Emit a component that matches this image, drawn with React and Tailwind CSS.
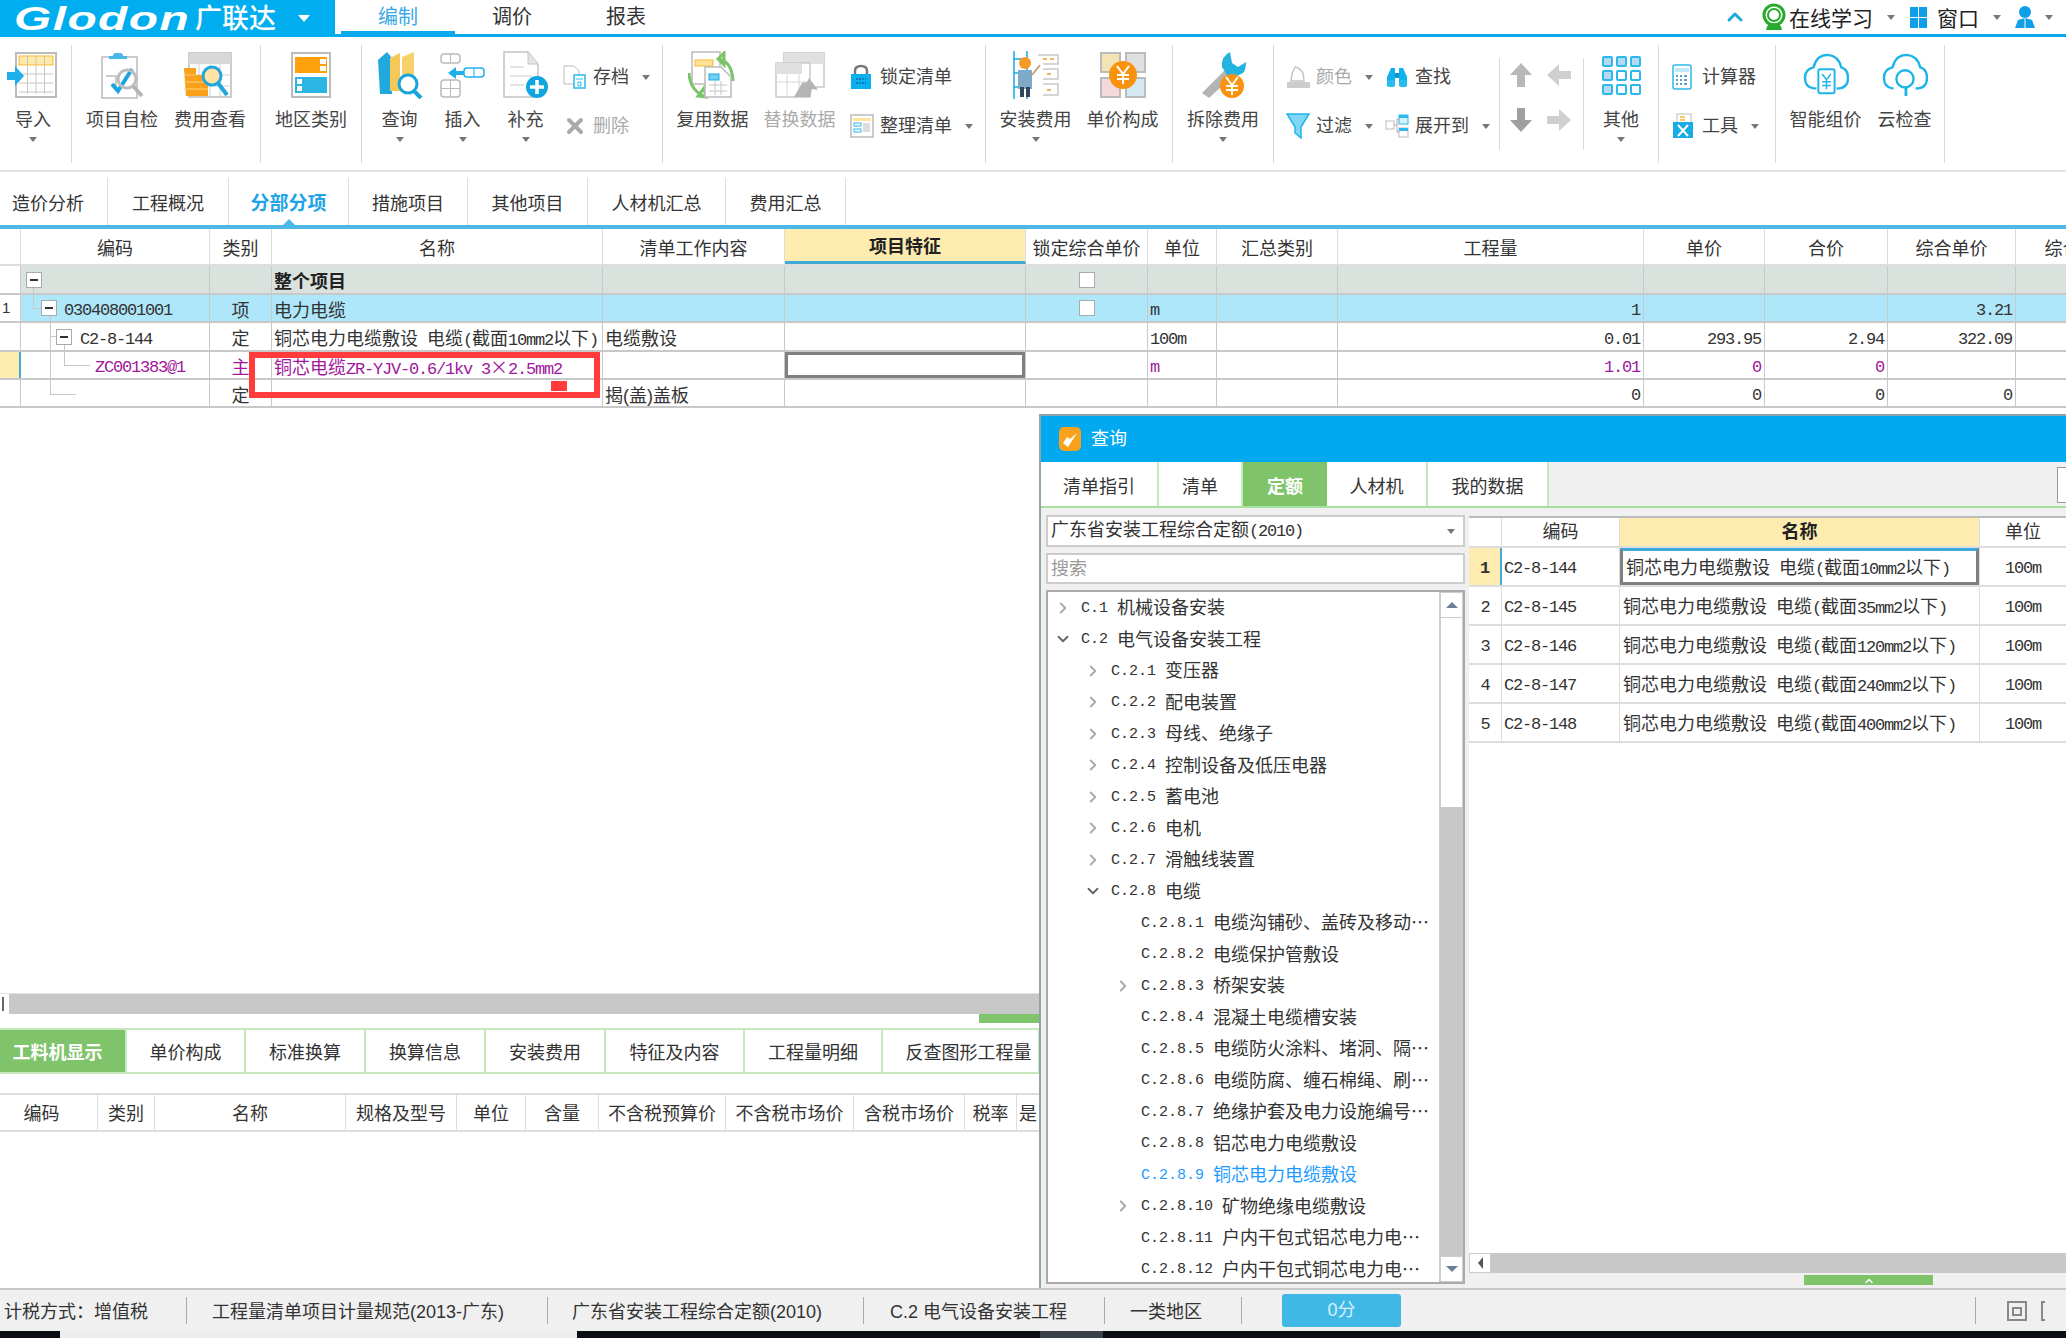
import { ChevronDown, ChevronRight, ChevronUp, X } from 'lucide-react'

const MAIN_HEAD = ['', '编码', '类别', '名称', '清单工作内容', '项目特征', '锁定综合单价', '单位', '汇总类别', '工程量', '单价', '合价', '综合单价', '综合合价']
const LOWER_TABS = [
  ['工料机显示', 'w-[127px] pr-[10px]'],
  ['单价构成', 'w-[119px]'],
  ['标准换算', 'w-[120px]'],
  ['换算信息', 'w-[120px]'],
  ['安装费用', 'w-[120px]'],
  ['特征及内容', 'w-[139px]'],
  ['工程量明细', 'w-[138px]'],
  ['反查图形工程量', 'w-[157px] pl-[16px]'],
]
const LOWER_HEAD = ['编码', '类别', '名称', '规格及型号', '单位', '含量', '不含税预算价', '不含税市场价', '含税市场价', '税率', '是']
const PAGE_TABS = [
  ['造价分析', 'w-[108px] pl-[12px]'],
  ['工程概况', 'w-[121px] justify-center'],
  ['分部分项', 'w-[120px] justify-center'],
  ['措施项目', 'w-[119px] justify-center'],
  ['其他项目', 'w-[120px] justify-center'],
  ['人材机汇总', 'w-[138px] justify-center'],
  ['费用汇总', 'w-[120px] justify-center'],
]
const TREE = [
  [0, 'C.1', '机械设备安装', 'right'],
  [0, 'C.2', '电气设备安装工程', 'down'],
  [1, 'C.2.1', '变压器', 'right'],
  [1, 'C.2.2', '配电装置', 'right'],
  [1, 'C.2.3', '母线、绝缘子', 'right'],
  [1, 'C.2.4', '控制设备及低压电器', 'right'],
  [1, 'C.2.5', '蓄电池', 'right'],
  [1, 'C.2.6', '电机', 'right'],
  [1, 'C.2.7', '滑触线装置', 'right'],
  [1, 'C.2.8', '电缆', 'down'],
  [2, 'C.2.8.1', '电缆沟铺砂、盖砖及移动⋯'],
  [2, 'C.2.8.2', '电缆保护管敷设'],
  [2, 'C.2.8.3', '桥架安装', 'right'],
  [2, 'C.2.8.4', '混凝土电缆槽安装'],
  [2, 'C.2.8.5', '电缆防火涂料、堵洞、隔⋯'],
  [2, 'C.2.8.6', '电缆防腐、缠石棉绳、刷⋯'],
  [2, 'C.2.8.7', '绝缘护套及电力设施编号⋯'],
  [2, 'C.2.8.8', '铝芯电力电缆敷设'],
  [2, 'C.2.8.9', '铜芯电力电缆敷设', null, true],
  [2, 'C.2.8.10', '矿物绝缘电缆敷设', 'right'],
  [2, 'C.2.8.11', '户内干包式铝芯电力电⋯'],
  [2, 'C.2.8.12', '户内干包式铜芯电力电⋯'],
]
const QUOTA = [
  ['C2-8-144', '10mm2'],
  ['C2-8-145', '35mm2'],
  ['C2-8-146', '120mm2'],
  ['C2-8-147', '240mm2'],
  ['C2-8-148', '400mm2'],
]
const INDENT = ['pl-[6px]', 'pl-[36px]', 'pl-[66px]']

// the grid figures are tall and narrow, nine pixels each
function Num({ children, className = '' }) {
  return <span className={`[font-family:'Liberation_Mono',monospace] text-[17px] tracking-[-1.2px] whitespace-pre ${className}`}>{children}</span>
}

function Caret({ className = '' }) {
  return <div className={`w-0 h-0 border-x-[4px] border-t-[5px] border-x-transparent border-t-[#777] ${className}`} />
}

/* ---------- ribbon drawings ---------- */
function ImportIcon() {
  return (
    <svg width="52" height="46" viewBox="0 0 52 46">
      <rect x="9" y="1" width="40" height="44" fill="#fff" stroke="#bbb" strokeWidth="2" />
      <rect x="12" y="4" width="34" height="9" fill="#ffe9a8" stroke="#f7b733" />
      <path d="M12 22h34M12 31h34M12 40h34M20.500 13v29M29 13v29M37.500 13v29M20.500 4v9M29 4v9M37.500 4v9" stroke="#c4c4c4" fill="none" />
      <path d="M0 20h8v-6l9 10-9 10v-6H0z" fill="#1fb0ec" />
    </svg>
  )
}
function CheckIcon() {
  return (
    <svg width="52" height="48" viewBox="0 0 52 48">
      <rect x="6" y="6" width="35" height="41" fill="#fff" stroke="#bbb" strokeWidth="1.500" />
      <path d="M17 5q0-3 3-3h4q3 0 3 3h4v3H13V5z" fill="#4ab8e6" />
      <path d="M10 25h10v10" stroke="#bbb" fill="none" strokeWidth="1.500" />
      <path d="M16 33l6 7 14-22" stroke="#16a5e0" strokeWidth="4" fill="none" />
      <circle cx="31" cy="28" r="9" fill="none" stroke="#bdbdbd" strokeWidth="3" />
      <path d="M37 35l9 10" stroke="#b5b5b5" strokeWidth="4" />
    </svg>
  )
}
function FeeIcon() {
  return (
    <svg width="52" height="48" viewBox="0 0 52 48">
      <rect x="5" y="2" width="42" height="44" fill="#fff" stroke="#bbb" strokeWidth="1.500" />
      <rect x="5" y="2" width="42" height="11" fill="#d8d8d8" />
      <path d="M15 13v32M26 13v32M36 13v32M5 24h42M5 35h42" stroke="#d0d0d0" fill="none" />
      <path d="M0 17h12v28H2z" fill="#f9a11b" />
      <path d="M12 24h12v21H12z" fill="#f9a11b" />
      <path d="M0 24h12M0 31h24M0 38h24" stroke="#ffd27a" />
      <circle cx="28" cy="25" r="9" fill="#ffe2a6" stroke="#22a7dc" strokeWidth="3" />
      <path d="M34 32l9 12" stroke="#22a7dc" strokeWidth="4" />
    </svg>
  )
}
function RegionIcon() {
  return (
    <svg width="40" height="46" viewBox="0 0 40 46">
      <rect x="1" y="1" width="38" height="44" fill="#fff" stroke="#bbb" strokeWidth="2" />
      <rect x="4" y="5" width="32" height="16" fill="#ffa10d" />
      <rect x="29" y="7" width="6" height="5" fill="#fff" />
      <rect x="29" y="14" width="6" height="5" fill="#fff" />
      <rect x="4" y="25" width="32" height="16" fill="#2bb5e2" />
      <rect x="6" y="27" width="5" height="5" fill="#fff" />
      <rect x="6" y="34" width="5" height="5" fill="#fff" />
    </svg>
  )
}
function QueryIcon() {
  return (
    <svg width="48" height="48" viewBox="0 0 48 48">
      <path d="M2 9l9-8 5 6v36H4z" fill="#1fa9dc" />
      <path d="M14 7l10-5v38H14z" fill="#f4c95a" />
      <path d="M26 6l12-5v30H26z" fill="#fad06c" />
      <circle cx="32" cy="33" r="9" fill="#fff" stroke="#17a5dc" strokeWidth="3" />
      <path d="M38 40l7 7" stroke="#17a5dc" strokeWidth="4" />
    </svg>
  )
}
function InsertIcon() {
  return (
    <svg width="46" height="46" viewBox="0 0 46 46">
      <rect x="1" y="2" width="19" height="9" rx="3" fill="#fff" stroke="#bbb" strokeWidth="1.500" />
      <path d="M10.500 2v9" stroke="#bbb" />
      <path d="M8 21l8-6v4h10v4H16v4z" fill="#1fb0ec" />
      <rect x="24" y="16" width="20" height="9" rx="3" fill="#fff" stroke="#1fb0ec" strokeWidth="1.500" />
      <path d="M34 16v9" stroke="#1fb0ec" />
      <rect x="1" y="28" width="19" height="17" rx="3" fill="#fff" stroke="#bbb" strokeWidth="1.500" />
      <path d="M10.500 28v17M1 36.500h19" stroke="#bbb" />
    </svg>
  )
}
function SupplementIcon() {
  return (
    <svg width="46" height="48" viewBox="0 0 46 48">
      <path d="M1 1h24l10 12v33H1z" fill="#fff" stroke="#c4c4c4" strokeWidth="1.500" />
      <path d="M25 1v12h10" fill="#e4e4e4" stroke="#c4c4c4" />
      <path d="M7 16h14M7 25h22M7 34h14" stroke="#e4e4e4" strokeWidth="2" />
      <circle cx="34" cy="36" r="11" fill="#0ea5e0" />
      <path d="M34 29v14M27 36h14" stroke="#fff" strokeWidth="3.500" />
    </svg>
  )
}
function ReuseIcon() {
  return (
    <svg width="50" height="48" viewBox="0 0 50 48">
      <rect x="4" y="1" width="28" height="32" fill="#fff" stroke="#bbb" strokeWidth="1.500" />
      <rect x="7" y="9" width="18" height="6" fill="#ffe49a" stroke="#f7b733" />
      <path d="M30 8q14 2 15 22M30 8l6-6v12z" stroke="#7cc46a" strokeWidth="3" fill="#7cc46a" fillOpacity="0" />
      <path d="M1 22q1 18 17 24M18 46l-2-9-6 8z" stroke="#7cc46a" strokeWidth="3" fill="none" />
      <path d="M17 16h16l10 10v20H17z" fill="#fff" stroke="#bbb" strokeWidth="1.500" />
      <rect x="21" y="23" width="10" height="6" fill="#6fd0f0" stroke="#19a8e0" />
      <path d="M21 34h18M21 40h18M27 30v14M33 30v14" stroke="#c4c4c4" fill="none" />
    </svg>
  )
}
function ReplaceIcon() {
  return (
    <svg width="50" height="46" viewBox="0 0 50 46">
      <rect x="9" y="1" width="40" height="34" fill="#fff" stroke="#c8c8c8" strokeWidth="1.500" />
      <rect x="9" y="1" width="40" height="11" fill="#e0e0e0" />
      <rect x="1" y="11" width="34" height="34" fill="#fff" stroke="#c8c8c8" strokeWidth="1.500" />
      <rect x="1" y="11" width="26" height="11" fill="#e0e0e0" />
      <path d="M1 30h34M12 22v22M24 22v22" stroke="#d4d4d4" />
      <path d="M19 45l8-14 5-1 2-4 9 12-6-1-2 8z" fill="#b4b4b4" />
    </svg>
  )
}
function WorkerIcon() {
  return (
    <svg width="46" height="48" viewBox="0 0 46 48">
      <path d="M1 0v48M14 0v48M1 8h13M1 22h13M1 36h13" stroke="#17a9e6" strokeWidth="1.500" fill="none" />
      <circle cx="12" cy="12" r="6" fill="#f59a23" />
      <rect x="5" y="19" width="14" height="19" fill="#7fa9c9" />
      <rect x="7" y="36" width="4" height="10" fill="#33475c" />
      <rect x="13" y="36" width="4" height="10" fill="#33475c" />
      <path d="M19 24l8-10" stroke="#caa07a" strokeWidth="2" />
      <path d="M25 4h20v9H30M30 18h15v10H30M30 33h15v11H30" stroke="#c8c8c8" strokeWidth="1.500" fill="#fff" />
      <path d="M30 8h4M37 8h4M34 23h4M34 39h4" stroke="#f59a23" strokeWidth="1.500" />
    </svg>
  )
}
function YuanBadge({ cx, cy, r }) {
  return (
    <g>
      <circle cx={cx} cy={cy} r={r} fill="#f9930f" />
      <path d={`M${cx - 6} ${cy - 9}l6 8 6-8M${cx} ${cy - 1}v10M${cx - 6} ${cy}h12M${cx - 6} ${cy + 4}h12`} stroke="#fff" strokeWidth="2" fill="none" />
    </g>
  )
}
function UnitPriceIcon() {
  return (
    <svg width="46" height="46" viewBox="0 0 46 46">
      <rect x="1" y="1" width="19" height="19" fill="#f2e4b4" stroke="#bbb" strokeWidth="2" />
      <rect x="26" y="1" width="19" height="19" fill="#e0e0e0" stroke="#bbb" strokeWidth="2" />
      <rect x="1" y="26" width="19" height="19" fill="#f4d9da" stroke="#bbb" strokeWidth="2" />
      <rect x="26" y="26" width="19" height="19" fill="#d4e8f2" stroke="#bbb" strokeWidth="2" />
      <YuanBadge cx={23} cy={23} r={14} />
    </svg>
  )
}
function RemovalIcon() {
  return (
    <svg width="46" height="48" viewBox="0 0 46 48">
      <path d="M2 42L26 18l7 7-24 22z" fill="#b4b4b4" />
      <path d="M30 1q-9 4-8 15l5 8q10 3 17-3 2-4 2-10l-8 5-6-4z" fill="#24b3e0" />
      <YuanBadge cx={32} cy={35} r={12} />
    </svg>
  )
}
function GridIcon() {
  const tiles = ['bg-[#b5daf2]', 'bg-[#b5daf2]', 'bg-[#b5daf2]', 'bg-[#b5daf2]', 'bg-white', 'bg-white', 'bg-[#b5daf2]', 'bg-white', 'bg-white']
  return (
    <div className="grid grid-cols-3 gap-[3px]">
      {tiles.map((bg, i) => (
        <div key={i} className={`w-[11px] h-[11px] border-2 border-[#2bb8ea] rounded-[2px] ${bg}`} />
      ))}
    </div>
  )
}
function CloudYuanIcon() {
  return (
    <svg width="46" height="44" viewBox="0 0 48 46">
      <path d="M14 37H11Q2 36 2 26q0-9 9-11Q14 2 26 2q11 1 14 13 7 2 7 11 0 10-9 11h-3" stroke="#1fb4e8" strokeWidth="2.500" fill="none" />
      <rect x="16" y="17" width="17" height="25" rx="2" fill="#fff" stroke="#1fb4e8" strokeWidth="2" />
      <path d="M20 22l4.500 6 4.500-6M24.500 28v10M20 30h9M20 34h9" stroke="#1fb4e8" strokeWidth="1.500" fill="none" />
    </svg>
  )
}
function CloudSearchIcon() {
  return (
    <svg width="46" height="44" viewBox="0 0 48 46">
      <path d="M12 37H11Q2 36 2 26q0-9 9-11Q14 2 26 2q11 1 14 13 7 2 7 11 0 10-9 11h-3" stroke="#1fb4e8" strokeWidth="2.500" fill="none" />
      <circle cx="24" cy="27" r="9" fill="#fff" stroke="#1fb4e8" strokeWidth="2.500" />
      <path d="M25 36v9" stroke="#1fb4e8" strokeWidth="3" />
    </svg>
  )
}
function ArchiveIcon() {
  return (
    <svg width="24" height="24" viewBox="0 0 24 24">
      <path d="M1 1h10l5 5v13H1z" fill="#fff" stroke="#bbb" />
      <rect x="11" y="10" width="11" height="13" fill="#fff" stroke="#2bb8ea" strokeWidth="1.500" />
      <path d="M13 14h7M15 17h3v4h-3z" stroke="#2bb8ea" fill="none" />
    </svg>
  )
}
function LockIcon() {
  return (
    <svg width="22" height="26" viewBox="0 0 22 26">
      <path d="M5 11V7q0-5 6-5t6 5v4" stroke="#777" strokeWidth="2.500" fill="none" />
      <rect x="1" y="10" width="20" height="15" fill="#0ab1f0" />
      <path d="M6 15h10M6 19h10" stroke="#0a6fa8" strokeWidth="1.500" strokeDasharray="2 1" />
    </svg>
  )
}
function OrganizeIcon() {
  return (
    <svg width="24" height="24" viewBox="0 0 24 24">
      <rect x="1" y="1" width="22" height="22" fill="#fff" stroke="#bbb" strokeWidth="1.500" />
      <rect x="3" y="4" width="18" height="3" fill="#ffe49a" />
      <rect x="4" y="9" width="7" height="3" fill="#fff" stroke="#2bb8ea" />
      <rect x="4" y="15" width="7" height="3" fill="#fff" stroke="#2bb8ea" />
      <rect x="13" y="9" width="7" height="9" fill="#ddd" />
    </svg>
  )
}
function ColorIcon() {
  return (
    <svg width="26" height="24" viewBox="0 0 26 24">
      <path d="M9 2q5 1 8 6l1 8H5l1-7z" fill="#fff" stroke="#c4c4c4" strokeWidth="1.500" />
      <rect x="1" y="17" width="23" height="6" fill="#ccc" />
    </svg>
  )
}
function FunnelIcon() {
  return (
    <svg width="24" height="26" viewBox="0 0 24 26">
      <path d="M1 1h22l-8 13v11l-6-5v-6z" fill="#7fd7f5" stroke="#21b4ea" strokeWidth="1.500" />
    </svg>
  )
}
function FindIcon() {
  return (
    <svg width="24" height="24" viewBox="0 0 24 24">
      <path d="M2 21V12L6 3h4v18zM14 21V3h4l4 9v9z" fill="#0fb0ee" />
      <rect x="2" y="15" width="8" height="7" rx="2" fill="#27bdf2" />
      <rect x="14" y="15" width="8" height="7" rx="2" fill="#27bdf2" />
      <rect x="10" y="8" width="4" height="5" fill="#0c93c9" />
    </svg>
  )
}
function ExpandIcon() {
  return (
    <svg width="24" height="24" viewBox="0 0 24 24">
      <rect x="1" y="7" width="8" height="8" fill="#fff" stroke="#bbb" />
      <rect x="14" y="1" width="9" height="9" fill="#d7effa" stroke="#2bb8ea" />
      <rect x="14" y="14" width="9" height="9" fill="#fff" stroke="#bbb" />
      <rect x="14" y="1" width="9" height="3" fill="#2bb8ea" />
      <rect x="14" y="14" width="9" height="3" fill="#2bb8ea" />
      <path d="M9 11h3v-6h2M12 11v7h2" stroke="#aaa" fill="none" />
    </svg>
  )
}
function CalculatorIcon() {
  return (
    <svg width="20" height="26" viewBox="0 0 20 26">
      <rect x="1" y="1" width="18" height="24" rx="2" fill="#fff" stroke="#2bb8ea" strokeWidth="1.500" />
      <rect x="3" y="4" width="14" height="4" fill="#bfe8f8" />
      <path d="M4 12h2M8 12h2M12 12h3M4 16h2M8 16h2M12 16h3M4 20h2M8 20h2M12 20h3" stroke="#5a9fc0" strokeWidth="2" />
    </svg>
  )
}
function ToolIcon() {
  return (
    <svg width="22" height="26" viewBox="0 0 22 26">
      <rect x="5" y="1" width="14" height="12" fill="#fff" stroke="#bbb" />
      <path d="M8 4h5M8 7h5M8 10h5" stroke="#f7b733" strokeWidth="1.500" />
      <rect x="1" y="9" width="20" height="16" fill="#17ace4" />
      <path d="M6 12l10 11M16 12L6 23" stroke="#fff" strokeWidth="2" />
    </svg>
  )
}
function ThickArrow({ dir, color }) {
  const rotate = { up: 'rotate-0', down: 'rotate-180', left: '-rotate-90', right: 'rotate-90' }[dir]
  return (
    <svg width="22" height="24" viewBox="0 0 22 24" className={rotate}>
      <path d="M11 0l11 12h-7v12H7V12H0z" fill={color} />
    </svg>
  )
}

/* ---------- ribbon layout ---------- */
function Sep({ short }) {
  return <div className={short ? 'w-px h-[92px] mt-[13px] bg-[#d8d8d8]' : 'w-px h-[118px] bg-[#d8d8d8]'} />
}

function BigButton({ icon, label, arrow, width, disabled }) {
  return (
    <div className={`flex flex-col items-center ${width}`}>
      <div className="mt-[7px] h-[46px] flex items-center justify-center">{icon}</div>
      <div className={`mt-[10px] h-[24px] leading-[24px] text-[18px] whitespace-nowrap ${disabled ? 'text-[#aaa]' : 'text-[#444]'}`}>{label}</div>
      {arrow && <Caret className="mt-[5px]" />}
    </div>
  )
}

function SmallButton({ icon, label, arrow, disabled }) {
  return (
    <div className="h-[28px] flex items-center">
      <div className="w-[30px] flex justify-start">{icon}</div>
      <span className={`text-[18px] whitespace-nowrap ${disabled ? 'text-[#aaa]' : 'text-[#444]'}`}>{label}</span>
      {arrow && <Caret className="ml-[13px]" />}
    </div>
  )
}

function SmallColumn({ children, className = '' }) {
  return <div className={`flex flex-col gap-[21px] pt-[18px] ${className}`}>{children}</div>
}

function Ribbon() {
  return (
    <div className="h-[135px] pt-[8px] flex bg-white border-b-2 border-[#e2e2e2]">
      <div className="w-[71px]"><BigButton icon={<ImportIcon />} label="导入" arrow width="w-[66px]" /></div>
      <Sep />
      <div className="w-[188px] pl-[6px] flex">
        <BigButton icon={<CheckIcon />} label="项目自检" width="w-[88px]" />
        <BigButton icon={<FeeIcon />} label="费用查看" width="w-[88px]" />
      </div>
      <Sep />
      <div className="w-[100px]"><BigButton icon={<RegionIcon />} label="地区类别" width="w-full" /></div>
      <Sep />
      <div className="w-[300px] pl-[6px] flex">
        <BigButton icon={<QueryIcon />} label="查询" arrow width="w-[63px]" />
        <BigButton icon={<InsertIcon />} label="插入" arrow width="w-[63px]" />
        <BigButton icon={<SupplementIcon />} label="补充" arrow width="w-[63px]" />
        <SmallColumn className="ml-[6px]">
          <SmallButton icon={<ArchiveIcon />} label="存档" arrow />
          <SmallButton icon={<X size={24} strokeWidth={4} className="text-[#aaa]" />} label="删除" disabled />
        </SmallColumn>
      </div>
      <Sep />
      <div className="w-[322px] pl-[6px] flex">
        <BigButton icon={<ReuseIcon />} label="复用数据" width="w-[87px]" />
        <BigButton icon={<ReplaceIcon />} label="替换数据" width="w-[87px]" disabled />
        <SmallColumn className="ml-[7px]">
          <SmallButton icon={<LockIcon />} label="锁定清单" />
          <SmallButton icon={<OrganizeIcon />} label="整理清单" arrow />
        </SmallColumn>
      </div>
      <Sep />
      <div className="w-[186px] pl-[6px] flex">
        <BigButton icon={<WorkerIcon />} label="安装费用" arrow width="w-[87px]" />
        <BigButton icon={<UnitPriceIcon />} label="单价构成" width="w-[87px]" />
      </div>
      <Sep />
      <div className="w-[100px]"><BigButton icon={<RemovalIcon />} label="拆除费用" arrow width="w-full" /></div>
      <Sep />
      <div className="w-[225px] pl-[12px] flex">
        <SmallColumn className="w-[99px]">
          <SmallButton icon={<ColorIcon />} label="颜色" arrow disabled />
          <SmallButton icon={<FunnelIcon />} label="过滤" arrow />
        </SmallColumn>
        <SmallColumn>
          <SmallButton icon={<FindIcon />} label="查找" />
          <SmallButton icon={<ExpandIcon />} label="展开到" arrow />
        </SmallColumn>
      </div>
      <Sep short />
      <div className="w-[83px] pl-[2px] flex">
        <SmallColumn className="w-[38px] items-center">
          <ThickArrow dir="up" color="#b8b8b8" />
          <ThickArrow dir="down" color="#a0a0a0" />
        </SmallColumn>
        <SmallColumn className="w-[38px] items-center">
          <ThickArrow dir="left" color="#cfcfcf" />
          <ThickArrow dir="right" color="#cfcfcf" />
        </SmallColumn>
      </div>
      <Sep short />
      <div className="w-[74px]"><BigButton icon={<GridIcon />} label="其他" arrow width="w-full" /></div>
      <Sep />
      <div className="w-[116px] pl-[13px]">
        <SmallColumn>
          <SmallButton icon={<CalculatorIcon />} label="计算器" />
          <SmallButton icon={<ToolIcon />} label="工具" arrow />
        </SmallColumn>
      </div>
      <Sep />
      <div className="w-[168px] pl-[10px] flex">
        <BigButton icon={<CloudYuanIcon />} label="智能组价" width="w-[79px]" />
        <BigButton icon={<CloudSearchIcon />} label="云检查" width="w-[79px]" />
      </div>
      <Sep />
    </div>
  )
}

/* ---------- title bar ---------- */
function TitleBar() {
  return (
    <div className="h-[37px] flex border-b-[3px] border-[#0aa9ec] bg-white">
      <div className="w-[335px] h-[37px] bg-[#00aeef] flex items-center pl-[14px] text-white overflow-hidden shrink-0">
        <div className="w-[181px]">
          <span className="inline-block origin-left scale-x-[1.45] [font-family:'Liberation_Sans',sans-serif] italic font-bold text-[33px] leading-[36px] tracking-[1px]">Glodon</span>
        </div>
        <span className="text-[27px] leading-[34px] font-medium w-[103px]">广联达</span>
        <div className="w-0 h-0 border-x-[6px] border-t-[7px] border-x-transparent border-t-white" />
      </div>
      <div className="ml-[6px] flex h-[34px]">
        <div className="w-[114px] flex justify-center text-[20px] leading-[34px] text-[#3ba9e6] border-b-[3px] border-[#0aa9ec]">编制</div>
        <div className="w-[114px] flex justify-center text-[20px] leading-[34px] text-[#333]">调价</div>
        <div className="w-[114px] flex justify-center text-[20px] leading-[34px] text-[#333]">报表</div>
      </div>
      <div className="flex-1 h-[34px] flex items-center justify-end text-[21px] text-[#222] overflow-hidden">
        <ChevronUp size={24} strokeWidth={3} className="text-[#1fa9e0] mr-[14px]" />
        <svg width="26" height="28" viewBox="0 0 26 28" className="mr-[2px]">
          <circle cx="13" cy="12" r="10" fill="none" stroke="#27ab2e" strokeWidth="3" />
          <circle cx="13" cy="12" r="6" fill="#fff" stroke="#27ab2e" strokeWidth="2" />
          <path d="M5 27q1-7 8-7t8 7z" fill="#27ab2e" />
        </svg>
        <span className="leading-[38px] h-[34px]">在线学习</span>
        <Caret className="ml-[14px] mr-[15px]" />
        <div className="grid grid-cols-2 gap-[1px]">
          <div className="w-[8px] h-[10px] bg-[#0f9ee8]" />
          <div className="w-[8px] h-[10px] bg-[#0f9ee8]" />
          <div className="w-[8px] h-[10px] bg-[#0f9ee8]" />
          <div className="w-[8px] h-[10px] bg-[#0f9ee8]" />
        </div>
        <span className="ml-[10px] leading-[38px] h-[34px]">窗口</span>
        <Caret className="ml-[14px] mr-[13px]" />
        <svg width="22" height="24" viewBox="0 0 22 24">
          <circle cx="11" cy="7" r="6" fill="#0f9ee8" />
          <path d="M1 23l3-8 7-2 7 2 3 8z" fill="#0f9ee8" />
          <path d="M11 13v10" stroke="#fff" />
        </svg>
        <Caret className="ml-[9px] mr-[13px]" />
      </div>
    </div>
  )
}

function PageTabs() {
  return (
    <div className="mt-[6px] h-[51px] flex bg-white border-b-[4px] border-[#4db8e8]">
      {PAGE_TABS.map(([label, width]) => (
        <div
          key={label}
          className={`relative flex items-center h-[47px] pt-[5px] border-r border-[#dedede] ${width} ${label === '分部分项' ? 'text-[19px] text-[#21a4e6] font-bold' : 'text-[18px] text-[#333]'}`}
        >
          {label}
          {label === '分部分项' && (
            <div className="absolute bottom-0 left-1/2 -ml-[6px] w-0 h-0 border-x-[6px] border-b-[6px] border-x-transparent border-b-[#4db8e8]" />
          )}
        </div>
      ))}
    </div>
  )
}

/* ---------- main grid ---------- */
const MAIN_GRID = 'grid grid-cols-[21px_189px_62px_331px_182px_241px_122px_69px_121px_306px_121px_123px_128px_130px]'
const RULE = 'bg-[#c8c8c8]'

function MinusBox({ className = '' }) {
  return (
    <div className={`relative z-10 w-[16px] h-[16px] bg-white border border-[#aaa] flex items-center justify-center shrink-0 ${className}`}>
      <div className="w-[8px] h-[2px] bg-[#333]" />
    </div>
  )
}

function Checkbox() {
  return <div className="w-[16px] h-[16px] bg-white border border-[#aaa]" />
}

function Cell({ children, className = '' }) {
  return <div className={`relative flex items-center border-r border-[#c8c8c8] overflow-hidden whitespace-nowrap ${className}`}>{children}</div>
}

function NumCell({ children, tone = '' }) {
  return (
    <Cell className="justify-end pr-[3px] pt-[6px]">
      <Num className={tone}>{children}</Num>
    </Cell>
  )
}

function MainRow({ height, bg, gutter, code, type, typeTone = '', name, work, feature, lock, unit, nums = [], tone = '' }) {
  return (
    <div className={`${MAIN_GRID} ${height} ${bg} border-b-2 border-[#c8c8c8] text-[18px] text-[#333]`}>
      {gutter}
      <Cell className="overflow-visible">{code}</Cell>
      <Cell className={`justify-center pt-[6px] ${typeTone}`}>{type}</Cell>
      <Cell className="pl-[2px] pt-[6px]"><span>{name}</span></Cell>
      <Cell className="pl-[2px] pt-[6px]">{work}</Cell>
      <Cell>{feature}</Cell>
      <Cell className="justify-center">{lock && <Checkbox />}</Cell>
      <Cell className="pl-[2px] pt-[6px]">{unit && <Num className={tone}>{unit}</Num>}</Cell>
      <Cell />
      <NumCell tone={tone}>{nums[0]}</NumCell>
      <NumCell tone={tone}>{nums[1]}</NumCell>
      <NumCell tone={tone}>{nums[2]}</NumCell>
      <NumCell>{nums[3]}</NumCell>
      <Cell />
    </div>
  )
}

function BlankGutter({ children, className = '' }) {
  return <div className={`flex items-center pl-[2px] border-r border-[#c8c8c8] ${className}`}>{children}</div>
}

function MainTable() {
  return (
    <div className="relative">
      <div className={`${MAIN_GRID} h-[37px] bg-white border-b-2 border-[#ddd] text-[18px] text-[#333]`}>
        {MAIN_HEAD.map((label, i) => (
          <div
            key={i}
            className={`flex justify-center items-center pt-[5px] whitespace-nowrap overflow-hidden border-r border-[#ddd] ${label === '项目特征' ? 'bg-[#fdebb0] font-bold text-[#222] border-b-[3px] border-b-[#3fa9d8]' : ''}`}
          >
            {label}
          </div>
        ))}
      </div>
      <MainRow
        height="h-[29px]"
        bg="bg-[#dae2de]"
        gutter={<BlankGutter className="bg-white" />}
        code={
          <>
            <MinusBox className="ml-[5px]" />
            <div className={`absolute left-[12px] top-[20px] w-px h-[9px] ${RULE}`} />
          </>
        }
        name={<b className="text-[#222]">整个项目</b>}
        lock
      />
      <MainRow
        height="h-[28px]"
        bg="bg-[#aee6fa]"
        gutter={<BlankGutter className="bg-white text-[15px]">1</BlankGutter>}
        code={
          <>
            <div className={`absolute left-[12px] top-0 w-px h-[13px] ${RULE}`} />
            <div className={`absolute left-[12px] top-[13px] w-[8px] h-px ${RULE}`} />
            <div className={`absolute left-[29px] top-[20px] w-px h-[8px] ${RULE}`} />
            <MinusBox className="ml-[20px]" />
            <Num className="ml-[7px] relative top-[3px]">030408001001</Num>
          </>
        }
        type="项"
        name="电力电缆"
        lock
        unit="m"
        nums={['1', '', '', '3.21']}
      />
      <MainRow
        height="h-[29px]"
        bg="bg-white"
        gutter={<BlankGutter />}
        code={
          <>
            <div className={`absolute left-[29px] top-0 w-px h-[28px] ${RULE}`} />
            <div className={`absolute left-[29px] top-[13px] w-[6px] h-px ${RULE}`} />
            <div className={`absolute left-[43px] top-[20px] w-px h-[8px] ${RULE}`} />
            <MinusBox className="ml-[35px]" />
            <Num className="ml-[8px] relative top-[3px]">C2-8-144</Num>
          </>
        }
        type="定"
        name={
          <>
            铜芯电力电缆敷设<Num> </Num>电缆<Num>(</Num>截面<Num>10mm2</Num>以下<Num>)</Num>
          </>
        }
        work="电缆敷设"
        unit="100m"
        nums={['0.01', '293.95', '2.94', '322.09']}
      />
      <MainRow
        height="h-[28px]"
        bg="bg-white"
        gutter={<BlankGutter className="bg-[#fdebb0] border-r-2 border-r-[#3fa9d8]" />}
        code={
          <>
            <div className={`absolute left-[29px] top-0 w-px h-[28px] ${RULE}`} />
            <div className={`absolute left-[43px] top-0 w-px h-[13px] ${RULE}`} />
            <div className={`absolute left-[43px] top-[13px] w-[26px] h-px ${RULE}`} />
            <Num className="ml-[74px] text-[#a0189c] relative top-[3px]">ZC001383@1</Num>
          </>
        }
        type="主"
        typeTone="text-[#a0189c]"
        name={
          <span className="text-[#a0189c]">
            铜芯电缆<Num>ZR-YJV-0.6/1kv 3</Num><span className="[font-family:'Noto_Sans_CJK_SC',sans-serif]">×</span><Num>2.5mm2</Num>
          </span>
        }
        feature={<div className="w-full h-full bg-white border-[3px] border-[#808080]" />}
        unit="m"
        tone="text-[#a0189c]"
        nums={['1.01', '0', '0', '']}
      />
      <MainRow
        height="h-[28px]"
        bg="bg-white"
        gutter={<BlankGutter />}
        code={
          <>
            <div className={`absolute left-[29px] top-0 w-px h-[14px] ${RULE}`} />
            <div className={`absolute left-[29px] top-[14px] w-[26px] h-px ${RULE}`} />
          </>
        }
        type="定"
        work="揭(盖)盖板"
        nums={['0', '0', '0', '0']}
      />
      <div className="absolute left-[249px] top-[123px] w-[351px] h-[46px] border-[6px] border-[#ff3b3b] z-20" />
      <div className="absolute left-[551px] top-[152px] w-[16px] h-[10px] bg-[#ff3b3b] z-20" />
    </div>
  )
}

/* ---------- lower left panel ---------- */
function LowerPanel() {
  return (
    <div className="w-[1040px] flex-1 flex flex-col bg-white">
      <div className="flex-1" />
      <div className="h-[21px] bg-[#c8c8c8] border-t border-[#e0e0e0] flex">
        <div className="w-[9px] bg-white flex items-center">
          <div className="w-[2px] h-[14px] bg-[#666] ml-[2px]" />
        </div>
      </div>
      <div className="h-[9px] flex justify-end">
        <div className="w-[61px] bg-[#7fc36b]" />
      </div>
      <div className="mt-[5px] h-[46px] flex border-y-2 border-[#c4eabb] text-[18px] text-[#333] overflow-hidden">
        {LOWER_TABS.map(([label, width], i) => (
          <div
            key={label}
            className={`flex items-center justify-center pt-[4px] whitespace-nowrap border-r-2 border-[#c4eabb] ${width} ${i === 0 ? 'bg-[#7fc36b] text-white font-bold' : 'bg-white'}`}
          >
            {label}
          </div>
        ))}
      </div>
      <div className="mt-[19px] h-[39px] grid grid-cols-[98px_57px_191px_111px_69px_73px_127px_128px_111px_52px_23px] border-y-2 border-[#ddd] text-[18px] text-[#333]">
        {LOWER_HEAD.map((label, i) => (
          <div key={label} className={`flex items-center justify-center pt-[3px] whitespace-nowrap overflow-hidden border-r border-[#ddd] ${i === 0 ? 'pr-[14px]' : ''}`}>
            {label}
          </div>
        ))}
      </div>
      <div className="h-[156px]" />
    </div>
  )
}

/* ---------- query window ---------- */
function TreeRow({ level, code, label, caret, active }) {
  return (
    <div className={`h-[31.5px] flex items-center whitespace-nowrap text-[18px] ${INDENT[level]} ${active ? 'text-[#1e9bff]' : 'text-[#333]'}`}>
      <div className="w-[27px] shrink-0">
        {caret === 'right' && <ChevronRight size={18} strokeWidth={2.500} className="text-[#aaa]" />}
        {caret === 'down' && <ChevronDown size={18} strokeWidth={2.500} className="text-[#666]" />}
      </div>
      <span className="[font-family:'Liberation_Mono',monospace] text-[15px] pt-[2px]">{code}</span>
      <span className="ml-[9px] pt-[2px]">{label}</span>
    </div>
  )
}

function QuotaTree() {
  return (
    <div className="h-[694px] flex bg-white border-2 border-[#aaa]">
      <div className="flex-1 overflow-hidden">
        {TREE.map(([level, code, label, caret, active]) => (
          <TreeRow key={code} level={level} code={code} label={label} caret={caret} active={active} />
        ))}
      </div>
      <div className="w-[24px] flex flex-col bg-[#c8c8c8] border-l border-[#ccc]">
        <div className="h-[26px] bg-white border border-[#ccc] flex items-center justify-center">
          <div className="w-0 h-0 border-x-[6px] border-b-[6px] border-x-transparent border-b-[#6d8095]" />
        </div>
        <div className="h-[189px] bg-white border-x border-[#ccc]" />
        <div className="flex-1" />
        <div className="h-[26px] bg-white border border-[#ccc] flex items-center justify-center">
          <div className="w-0 h-0 border-x-[6px] border-t-[6px] border-x-transparent border-t-[#6d8095]" />
        </div>
      </div>
    </div>
  )
}

const QUOTA_GRID = 'grid grid-cols-[33px_118px_359px_87px]'

function QuotaTable() {
  return (
    <div className="flex-1 bg-white border-t-2 border-[#bbb] overflow-hidden">
      <div className={`${QUOTA_GRID} h-[30px] border-b-2 border-[#ddd] text-[18px] text-[#333]`}>
        <div className="border-r border-[#ddd]" />
        <div className="flex items-center justify-center border-r border-[#ddd]">编码</div>
        <div className="flex items-center justify-center bg-[#fdebb0] font-bold text-[#222]">名称</div>
        <div className="flex items-center justify-center border-l border-[#ddd]">单位</div>
      </div>
      {QUOTA.map(([code, size], i) => (
        <div key={code} className={`${QUOTA_GRID} h-[39px] border-b-2 border-[#ddd] text-[18px] text-[#333]`}>
          <div className={`flex items-center justify-center pt-[4px] ${i === 0 ? 'bg-[#fdebb0] border-r-2 border-[#3fa9d8] font-bold' : 'border-r border-[#ddd]'}`}>
            <Num className={i === 0 ? 'font-bold' : ''}>{i + 1}</Num>
          </div>
          <div className="flex items-center pl-[2px] pt-[4px] border-r border-[#ddd]">
            <Num>{code}</Num>
          </div>
          <div className={`flex items-center pl-[3px] pt-[4px] whitespace-nowrap overflow-hidden ${i === 0 ? 'border-[3px] border-[#808080] border-t-[#3fa9d8]' : ''}`}>
            <span>
              铜芯电力电缆敷设<Num> </Num>电缆<Num>(</Num>截面<Num>{size}</Num>以下<Num>)</Num>
            </span>
          </div>
          <div className="flex items-center justify-center pt-[4px] border-l border-[#ddd]">
            <Num>100m</Num>
          </div>
        </div>
      ))}
    </div>
  )
}

function QueryWindow() {
  return (
    <div className="absolute left-[1039px] top-[414px] right-0 h-[874px] z-30 flex flex-col bg-[#f0f0f0] border-l-2 border-t-2 border-[#8fa3ad]">
      <div className="h-[46px] shrink-0 bg-[#00a9f0] flex items-center pl-[17px] text-[18px] text-white">
        <svg width="24" height="26" viewBox="0 0 24 26" className="mr-[9px]">
          <rect x="1" y="1" width="22" height="24" rx="5" fill="#f9a11b" />
          <path d="M5 17l5 4 9-14-7 6-3-2z" fill="#fff" />
        </svg>
        查询
      </div>
      <div className="h-[46px] shrink-0 flex items-stretch border-b-2 border-[#a8e0a0] text-[18px] text-[#333] relative">
        <div className="w-[118px] flex items-center justify-center pt-[7px] bg-white border-r-2 border-[#c4eabb]">清单指引</div>
        <div className="w-[84px] flex items-center justify-center pt-[7px] bg-white border-r-2 border-[#c4eabb]">清单</div>
        <div className="w-[84px] flex items-center justify-center pt-[7px] bg-[#7fc36b] text-white font-bold">定额</div>
        <div className="w-[101px] flex items-center justify-center pt-[7px] bg-white border-r-2 border-[#c4eabb]">人材机</div>
        <div className="w-[121px] flex items-center justify-center pt-[7px] bg-white border-r-2 border-[#c4eabb]">我的数据</div>
        <div className="absolute right-0 top-[5px] w-[9px] h-[36px] bg-white border border-[#999] border-r-0" />
      </div>
      <div className="flex-1 flex pl-[5px]">
        <div className="w-[419px] shrink-0 pt-[7px] flex flex-col gap-[6px]">
          <div className="h-[32px] bg-white border-2 border-[#ccc] flex items-center pl-[3px] pr-[8px] text-[18px] text-[#333]">
            <span className="flex-1">广东省安装工程综合定额<Num>(2010)</Num></span>
            <Caret />
          </div>
          <div className="h-[31px] bg-white border-2 border-[#ccc] flex items-center pl-[3px] pt-[2px] text-[18px] text-[#999]">搜索</div>
          <QuotaTree />
        </div>
        <div className="flex-1 ml-[4px] pt-[8px] flex flex-col min-w-0">
          <QuotaTable />
          <div className="h-[20px] shrink-0 bg-[#c8c8c8] flex">
            <div className="w-[22px] bg-white flex items-center justify-center border border-[#ccc]">
              <div className="w-0 h-0 border-y-[6px] border-r-[5px] border-y-transparent border-r-[#555]" />
            </div>
          </div>
          <div className="h-[15px] shrink-0 pt-[2px]">
            <div className="ml-[335px] w-[129px] h-[10px] bg-[#7fc36b] flex justify-center">
              <ChevronUp size={12} strokeWidth={3} className="text-white" />
            </div>
          </div>
        </div>
      </div>
    </div>
  )
}

/* ---------- status bar ---------- */
function StatusBar() {
  return (
    <div className="h-[43px] shrink-0 flex items-center bg-[#f0f0f0] border-t-2 border-[#c8c8c8] text-[18px] text-[#333] whitespace-nowrap relative z-40">
      <div className="w-[187px] h-[27px] pl-[4px] pt-[3px] flex items-center border-r border-[#aaa]">计税方式：增值税</div>
      <div className="w-[361px] h-[27px] pl-[25px] pt-[3px] flex items-center border-r border-[#aaa]">工程量清单项目计量规范(2013-广东)</div>
      <div className="w-[316px] h-[27px] pl-[24px] pt-[3px] flex items-center border-r border-[#aaa]">广东省安装工程综合定额(2010)</div>
      <div className="w-[241px] h-[27px] pl-[26px] pt-[3px] flex items-center border-r border-[#aaa]">C.2 电气设备安装工程</div>
      <div className="w-[137px] h-[27px] pl-[25px] pt-[3px] flex items-center border-r border-[#aaa]">一类地区</div>
      <div className="ml-[40px] w-[119px] h-[33px] rounded-[3px] bg-[#40b8e6] flex items-center justify-center text-[#d8f2fc]">0分</div>
      <div className="ml-[574px] w-px h-[27px] bg-[#aaa]" />
      <svg width="20" height="20" viewBox="0 0 20 20" className="ml-[31px] shrink-0">
        <rect x="1" y="1" width="18" height="18" fill="none" stroke="#888" strokeWidth="2" />
        <rect x="6" y="7" width="8" height="7" fill="none" stroke="#888" strokeWidth="2" />
      </svg>
      <div className="ml-[14px] w-[4px] h-[20px] border-l-2 border-y-2 border-[#888] shrink-0" />
    </div>
  )
}

export default function App() {
  return (
    <div className="relative w-[2066px] h-[1338px] overflow-hidden flex flex-col bg-white [font-family:'Liberation_Sans','Noto_Sans_CJK_SC',sans-serif]">
      <TitleBar />
      <Ribbon />
      <PageTabs />
      <MainTable />
      <LowerPanel />
      <StatusBar />
      <div className="h-[7px] shrink-0 flex relative z-40">
        <div className="w-[60px] bg-[#0a0d14]" />
        <div className="w-[517px] bg-[#ececec]" />
        <div className="w-[463px] bg-[#0a0d14]" />
        <div className="w-[63px] bg-[#3a4048]" />
        <div className="flex-1 bg-[#0a0d14]" />
      </div>
      <QueryWindow />
    </div>
  )
}
